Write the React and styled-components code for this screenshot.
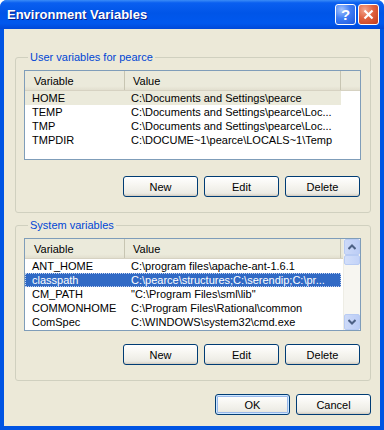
import React from 'react';
import styled, { createGlobalStyle } from 'styled-components';

const GlobalStyle = createGlobalStyle`
  html, body {
    margin: 0;
    padding: 0;
    background: #ffffff;
  }
  body {
    font-family: "Liberation Sans", Arial, sans-serif;
    font-size: 11px;
  }
`;

const Frame = styled.div`
  width: 384px;
  height: 430px;
  box-sizing: border-box;
  display: flex;
  flex-direction: column;
  background: #0054e3;
  border-radius: 7px 7px 0 0;
  overflow: hidden;
`;

const TitleBar = styled.div`
  height: 29px;
  flex: none;
  display: flex;
  align-items: center;
  padding: 0 5px 0 7px;
  background: linear-gradient(
    to bottom,
    #3b8cf7 0%,
    #0a5ff0 10%,
    #0055e8 45%,
    #0058ee 80%,
    #0048d8 100%
  );
`;

const Title = styled.div`
  flex: 1;
  color: #ffffff;
  font-weight: bold;
  font-size: 13px;
  text-shadow: 1px 1px 0 #0a1f8a;
  padding-bottom: 1px;
`;

const CaptionButton = styled.div`
  width: 21px;
  height: 21px;
  box-sizing: border-box;
  margin-left: 2px;
  border: 1px solid #ffffff;
  border-radius: 3px;
  display: flex;
  align-items: center;
  justify-content: center;
  color: #ffffff;
  font-weight: bold;
  font-size: 15px;
  background: ${p =>
    p.close
      ? 'radial-gradient(circle at 30% 25%, #f3a58e 0%, #e0623f 45%, #c23c1b 100%)'
      : 'radial-gradient(circle at 30% 25%, #a6c4fc 0%, #3f7df4 45%, #1d58dc 100%)'};
`;

const Body = styled.div`
  flex: 1;
  display: flex;
  flex-direction: column;
  margin: 0 4px 4px 4px;
  padding: 21px 9px 0 11px;
  background: #ece9d8;
`;

const Group = styled.fieldset`
  margin: ${p => (p.first ? '0' : '5px')} 0 0 0;
  padding: 6px 9px 15px 8px;
  border: 1px solid #d0d0bf;
  border-radius: 3px;
  min-width: 0;
`;

const Legend = styled.legend`
  margin-left: 4px;
  padding: 0 2px;
  line-height: 14px;
  color: #0046d5;
  font-size: 11px;
`;

const ListBox = styled.div`
  height: ${p => p.height}px;
  box-sizing: border-box;
  border: 1px solid #7f9db9;
  background: #ffffff;
  display: flex;
`;

const ListMain = styled.div`
  flex: 1;
  display: flex;
  flex-direction: column;
  min-width: 0;
`;

const Header = styled.div`
  height: 19px;
  flex: none;
  display: flex;
  background: linear-gradient(to bottom, #ebeadb 0%, #ebeadb 80%, #e2dfcf 100%);
  border-bottom: 1px solid #d6d2c2;
`;

const HeaderCell = styled.div`
  width: ${p => p.w}px;
  box-sizing: border-box;
  padding-left: ${p => p.pad}px;
  display: flex;
  align-items: center;
  color: #000000;
  border-right: 1px solid #c7c5b2;
  position: relative;
`;

const Row = styled.div`
  width: 316px;
  height: 14px;
  display: flex;
  align-items: center;
  box-sizing: border-box;
  background: ${p => (p.selected ? '#316ac5' : p.inactive ? '#ebeadb' : 'transparent')};
  color: ${p => (p.selected ? '#ffffff' : '#000000')};
  outline: ${p => (p.selected ? '1px dotted #c6d4ee' : 'none')};
  outline-offset: -1px;
`;

const Cell = styled.div`
  width: ${p => p.w}px;
  box-sizing: border-box;
  padding-left: ${p => p.pad}px;
  white-space: nowrap;
  overflow: hidden;
`;

const ScrollBar = styled.div`
  width: 16px;
  flex: none;
  display: flex;
  flex-direction: column;
  background: #f7f6f1;
  border-left: 1px solid #eeede5;
`;

const ScrollButton = styled.div`
  height: 16px;
  box-sizing: border-box;
  border: 1px solid #b8cbf3;
  border-radius: 2px;
  background: linear-gradient(to right, #cddaf8, #bccdf6);
  display: flex;
  align-items: center;
  justify-content: center;
`;

const Thumb = styled.div`
  height: 10px;
  box-sizing: border-box;
  border: 1px solid #b8cbf3;
  border-radius: 2px;
  background: linear-gradient(to right, #d3dffa, #c3d3f8);
`;

const Track = styled.div`
  flex: 1;
`;

const ButtonRow = styled.div`
  display: flex;
  justify-content: flex-end;
  gap: 6px;
  margin-top: ${p => p.top}px;
  padding-right: ${p => p.right}px;
`;

const Button = styled.div`
  width: 75px;
  height: 21px;
  box-sizing: border-box;
  border: 1px solid #003c74;
  border-radius: 3px;
  display: flex;
  align-items: center;
  justify-content: center;
  color: #000000;
  background: linear-gradient(to bottom, #ffffff 0%, #f6f5f0 45%, #ecebe4 85%, #d6d0c5 100%);
  box-shadow: ${p =>
    p.primary ? 'inset 0 0 0 1px #cee7ff, inset 0 0 0 2px #98b8ea' : 'inset 0 -1px 0 #d6d0c5'};
`;

const userVars = [
  ['HOME', 'C:\\Documents and Settings\\pearce'],
  ['TEMP', 'C:\\Documents and Settings\\pearce\\Loc...'],
  ['TMP', 'C:\\Documents and Settings\\pearce\\Loc...'],
  ['TMPDIR', 'C:\\DOCUME~1\\pearce\\LOCALS~1\\Temp'],
];

const systemVars = [
  ['ANT_HOME', 'C:\\program files\\apache-ant-1.6.1'],
  ['classpath', 'C:\\pearce\\structures;C:\\serendip;C:\\pr...'],
  ['CM_PATH', '"C:\\Program Files\\sml\\lib"'],
  ['COMMONHOME', 'C:\\Program Files\\Rational\\common'],
  ['ComSpec', 'C:\\WINDOWS\\system32\\cmd.exe'],
];

const Arrow = ({ down }) => (
  <svg width="8" height="6" viewBox="0 0 8 6">
    <path
      d={down ? 'M0.5 1 L4 4.5 L7.5 1' : 'M0.5 5 L4 1.5 L7.5 5'}
      fill="none"
      stroke="#4d6185"
      strokeWidth="2"
    />
  </svg>
);

const VarList = ({ rows, height, selected, inactive, scroll }) => (
  <ListBox height={height}>
    <ListMain>
      <Header>
        <HeaderCell w={100} pad={9}>Variable</HeaderCell>
        <HeaderCell w={216} pad={8}>Value</HeaderCell>
      </Header>
      {rows.map(([name, value], i) => (
        <Row key={name} selected={i === selected} inactive={i === inactive}>
          <Cell w={100} pad={7}>{name}</Cell>
          <Cell w={216} pad={6}>{value}</Cell>
        </Row>
      ))}
    </ListMain>
    {scroll && (
      <ScrollBar>
        <ScrollButton>
          <Arrow />
        </ScrollButton>
        <Thumb />
        <Track />
        <ScrollButton>
          <Arrow down />
        </ScrollButton>
      </ScrollBar>
    )}
  </ListBox>
);

const App = () => (
  <>
    <GlobalStyle />
    <Frame>
      <TitleBar>
        <Title>Environment Variables</Title>
        <CaptionButton>?</CaptionButton>
        <CaptionButton close>
          <svg width="11" height="11" viewBox="0 0 11 11">
            <path d="M1.5 1.5 L9.5 9.5 M9.5 1.5 L1.5 9.5" stroke="#ffffff" strokeWidth="2.2" />
          </svg>
        </CaptionButton>
      </TitleBar>
      <Body>
        <Group first>
          <Legend>User variables for pearce</Legend>
          <VarList rows={userVars} height={90} inactive={0} />
          <ButtonRow top={16} right={1}>
            <Button>New</Button>
            <Button>Edit</Button>
            <Button>Delete</Button>
          </ButtonRow>
        </Group>
        <Group>
          <Legend>System variables</Legend>
          <VarList rows={systemVars} height={93} selected={1} scroll />
          <ButtonRow top={13} right={1}>
            <Button>New</Button>
            <Button>Edit</Button>
            <Button>Delete</Button>
          </ButtonRow>
        </Group>
        <ButtonRow top={13} right={0}>
          <Button primary>OK</Button>
          <Button>Cancel</Button>
        </ButtonRow>
      </Body>
    </Frame>
  </>
);

export default App;
